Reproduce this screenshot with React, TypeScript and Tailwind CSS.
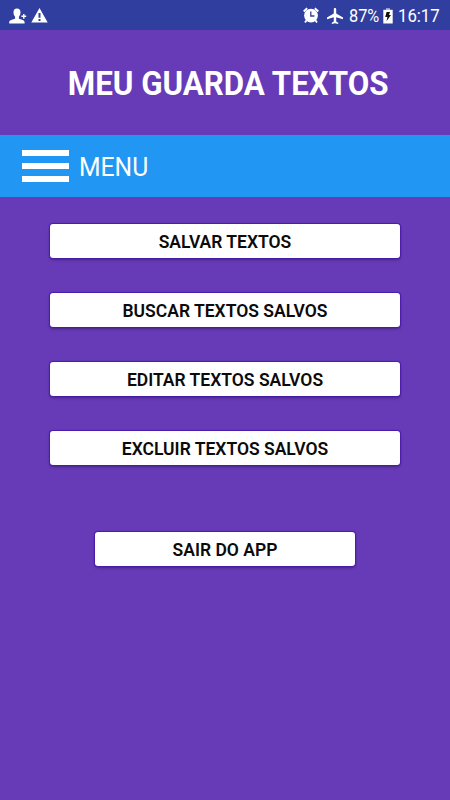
const menuItems = [
  "SALVAR TEXTOS",
  "BUSCAR TEXTOS SALVOS",
  "EDITAR TEXTOS SALVOS",
  "EXCLUIR TEXTOS SALVOS",
];

function ContactIcon() {
  return (
    <svg width="18" height="16" viewBox="0 0 18 16" fill="#fff">
      <path d="M8 0.6C10.3 0.6 11.6 2.2 11.5 4.6C11.4 6.8 10.5 8 9.9 8.8V10.6C11.6 11.8 15.6 12 15.6 14.3V15.6H0.2V14.3C0.2 12 4.4 11.8 6.1 10.6V8.8C5.4 8 4.6 6.8 4.5 4.6C4.4 2.2 5.7 0.6 8 0.6Z" />
      <path d="M14.1 5.9h1.4v1.7h1.7v1.4h-1.7v1.7h-1.4V9h-1.7V7.6h1.7z" />
    </svg>
  );
}

function WarningIcon() {
  return (
    <svg width="17" height="15" viewBox="0 0 17 15" fill="#fff">
      <path
        fillRule="evenodd"
        d="M8.5 0.1L16.7 14.6H0.3ZM7.5 5V9.8H9.5V5ZM7.5 11V13H9.5V11Z"
      />
    </svg>
  );
}

function AlarmIcon() {
  return (
    <svg width="16" height="17" viewBox="0 0 16 17">
      <path d="M0.7 4.4L4.2 1.3M15.3 4.4L11.8 1.3" stroke="#fff" strokeWidth="2" />
      <path d="M3.6 13.2L2 15.6M12.4 13.2L14 15.6" stroke="#fff" strokeWidth="1.8" />
      <circle cx="8" cy="8.6" r="6.9" fill="#fff" />
      <path d="M7.8 4.6V9H11.4" fill="none" stroke="#303f9f" strokeWidth="1.3" />
    </svg>
  );
}

function PlaneIcon() {
  return (
    <svg width="16" height="16" viewBox="2 2 20 20" fill="#fff">
      <path d="M22 16v-2l-8.5-5V3.5c0-.83-.67-1.5-1.5-1.5s-1.5.67-1.5 1.5V9L2 14v2l8.5-2.5V19L8 20.5V22l4-1 4 1v-1.5L13.5 19v-5.5L22 16z" />
    </svg>
  );
}

function BatteryIcon() {
  return (
    <svg width="10" height="16" viewBox="0 0 10 16">
      <path d="M3 0.2H7V2H3Z" fill="#a9afd6" />
      <path d="M0.3 1.8H9.7V15.5H0.3Z" fill="#fff" />
      <path d="M3.6 4H7L6 7H8L3.5 13.2L4.4 8.9H2.2Z" fill="#111" />
    </svg>
  );
}

function MenuButton({ label, className }: { label: string; className: string }) {
  return (
    <button
      type="button"
      className={`h-[34px] rounded-[3px] bg-white pt-0.5 text-[17.5px] leading-[32px] font-semibold text-[#0b0b0b] shadow-[0_0_1px_1px_#4a1bab,0_2px_3px_rgba(0,0,0,0.3)] ${className}`}
    >
      {label}
    </button>
  );
}

export default function App() {
  return (
    <main className="flex h-[800px] w-[450px] flex-col overflow-hidden bg-[#673ab7] font-['Roboto',sans-serif]">
      <div className="flex h-[30px] shrink-0 items-center bg-[#303f9f] pt-0.5 pr-[10px] pl-[9px] text-white">
        <ContactIcon />
        <span className="ml-1 pb-px">
          <WarningIcon />
        </span>
        <div className="ml-auto flex items-center">
          <span className="pb-px">
            <AlarmIcon />
          </span>
          <span className="ml-2">
            <PlaneIcon />
          </span>
          <span className="ml-1.5 w-[31px] origin-left scale-x-[0.86] text-[19px] leading-[22px] whitespace-nowrap">
            87%
          </span>
          <span className="ml-[3px]">
            <BatteryIcon />
          </span>
          <span className="ml-[5px] w-[42px] origin-left scale-x-[0.88] text-[19px] leading-[22px] whitespace-nowrap">
            16:17
          </span>
        </div>
      </div>

      <header className="flex h-[105px] shrink-0 items-center justify-center pt-0.5 pl-[6px]">
        <h1 className="scale-x-[0.948] text-[33px] leading-[38px] font-bold whitespace-nowrap text-white">
          MEU GUARDA TEXTOS
        </h1>
      </header>

      <nav className="flex h-[62px] shrink-0 items-center bg-[#2196f3] pl-[21.5px]">
        <div className="flex w-[47.5px] flex-col gap-[7px]">
          <span className="h-1.5 bg-white" />
          <span className="h-1.5 bg-white" />
          <span className="h-1.5 bg-white" />
        </div>
        <span className="ml-[10px] origin-left scale-x-[0.95] pt-0.5 text-[26px] leading-[30px] text-white">
          MENU
        </span>
      </nav>

      <section className="flex flex-col items-center pt-[27px]">
        <div className="flex flex-col gap-[35px]">
          {menuItems.map((item) => (
            <MenuButton key={item} label={item} className="w-[350px]" />
          ))}
        </div>
        <MenuButton label="SAIR DO APP" className="mt-[67px] w-[260px]" />
      </section>
    </main>
  );
}
